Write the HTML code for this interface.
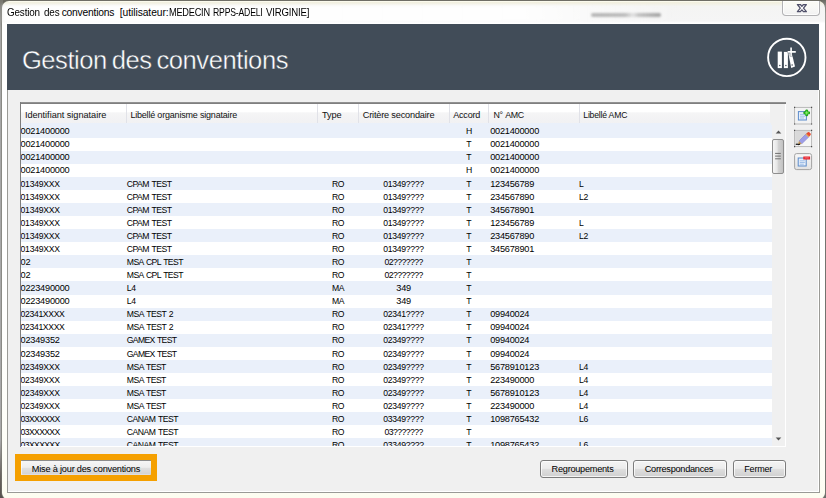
<!DOCTYPE html>
<html lang="fr">
<head>
<meta charset="utf-8">
<title>Gestion des conventions</title>
<style>
html,body{margin:0;padding:0;}
body{width:826px;height:498px;overflow:hidden;position:relative;background:#68675e;font-family:"Liberation Sans","DejaVu Sans",sans-serif;color:#111;}
.abs{position:absolute;}
#outerL{left:0;top:0;width:3px;height:498px;background:linear-gradient(#77766e 0,#8c8c88 10px,#a6a6a6 30px,#a9a9a9 440px,#6a6560 475px,#55504c 498px);}
#outerR{left:822px;top:0;width:4px;height:498px;background:linear-gradient(#6a6a62 0,#8a8a86 6px,#c4c4c4 14px,#cfcfcf 60px,#8a8a88 120px,#707070 170px,#6e6e6c 498px);}
#frame{left:1.6px;top:0.9px;width:823.9px;height:498.6px;border-radius:7px 7px 6px 6px;box-shadow:0 0 0 0.6px #77776f;background:linear-gradient(#fffff4 0,#f1efde 1.6px,#f2f1e6 3px,#f4f4f3 5.5px,#f5f5f5 20px,#fefefe 22px,#ffffff 23px,#ffffff 300px,#fefef6 470px,#fdfdf0 498px);}
#fline{left:6.6px;top:90px;width:813.7px;height:402.8px;box-sizing:border-box;border:1px solid #9a9a96;border-top:none;background:#fff;}
#title{left:0;top:5.7px;width:400px;height:13px;}
.tf{position:absolute;top:0;font-size:10.3px;line-height:13px;color:#000;white-space:pre;transform-origin:0 50%;}
.f{position:absolute;top:0;white-space:pre;transform-origin:0 50%;}
#closebtn{left:782px;top:1px;width:37.6px;height:15.4px;box-sizing:border-box;border:1px solid #b2b2b4;border-top:none;border-radius:0 0 4px 4px;background:linear-gradient(#fbfbf4,#f8f8f6 50%,#f1f1f1);box-shadow:inset 0 0 0 1px rgba(255,255,255,.8);}
#client{left:7.7px;top:24px;width:810.3px;height:466.9px;background:#f0f0f0;}
#hdr{left:7px;top:24px;width:812.4px;height:66px;background:#414c58;}
#hdr h1{position:absolute;left:14.9px;top:20.6px;margin:0;font-weight:normal;font-size:25.6px;line-height:30px;color:#fff;white-space:nowrap;letter-spacing:-0.46px;word-spacing:-1.8px;-webkit-text-stroke:0.4px #414c58;}
#list{left:20px;top:102px;width:766.4px;height:345.1px;background:#fff;overflow:hidden;}
#lt{left:0;top:0.2px;width:766.4px;height:1.6px;background:linear-gradient(#9a9a9a,#767676);}
#ll{left:0.2px;top:0;width:1.2px;height:345.1px;background:#7c7c7c;}
#lhead{left:1.2px;top:1.8px;width:748.8px;height:19px;background:linear-gradient(#ffffff 0%,#ffffff 42%,#f5f5f6 46%,#f1f1f3 100%);border-bottom:1px solid #dcdde0;font-size:9.2px;line-height:12px;color:#111;}
#lhead .f{top:5.2px;}
#lhead i{position:absolute;top:0;width:1px;height:19px;background:#e1e2e8;}
#lhfill{left:750px;top:1.8px;width:15.4px;height:21px;background:#f0f0f0;}
#rowfill{left:1.2px;top:21.4px;width:750.3px;height:2px;background:#eaf0fa;}
#rows{left:0;top:23px;width:751.5px;height:321.2px;overflow:hidden;}
.r{position:absolute;left:0;width:751.5px;height:13.04px;font-size:9.2px;line-height:13px;white-space:nowrap;color:#000;}
.r.a{background:#eaf0fa;}
.rt{position:absolute;left:0;width:751px;height:13px;}
#sb{left:751.5px;top:22.8px;width:13.6px;height:321.4px;background:#f0f0f0;}
#thumb{left:0.7px;top:14.5px;width:11.8px;height:34.6px;border:1px solid #8e8e8e;border-radius:2px;background:linear-gradient(90deg,#f6f6f6,#e6e6e6 40%,#d2d2d2 55%,#c2c2c2);box-sizing:border-box;}
.btn{box-sizing:border-box;border:1px solid #7c7c7c;border-radius:3px;background:linear-gradient(#f4f4f4 0%,#ececec 46%,#dedede 52%,#d0d0d0 100%);font-size:9.2px;line-height:14px;color:#000;white-space:nowrap;box-shadow:inset 0 0 0 1px rgba(255,255,255,.75);}
.btn .f{top:1.3px;}
.btn.flat{border:none;border-top:0.7px solid #8c8c8c;border-radius:1px;box-shadow:inset 1px 0 0 rgba(255,255,255,.6);background:linear-gradient(#f6f6f6 0%,#eeeeee 45%,#e0e0e0 52%,#d4d4d4 92%,#e6e6ee 100%);}
.btn.flat .f{top:0.8px;}
#hl{left:14.9px;top:454.2px;width:142.3px;height:26.6px;background:#f5a000;}
.ib{box-sizing:border-box;width:18px;height:17px;border:1px solid #8a8a8a;border-radius:2px;background:linear-gradient(#f6f6f6,#e4e4e4);}
</style>
</head>
<body>
<div id="outerL" class="abs"></div><div id="outerR" class="abs"></div>
<div id="frame" class="abs"></div>
<div id="fline" class="abs"></div><div class="abs" style="left:2px;top:23px;width:822.6px;height:67px;background:#fff"></div>
<div class="abs" style="left:3px;top:5px;width:700px;height:17px;background:linear-gradient(90deg,rgba(255,255,255,.9) 0,rgba(255,255,255,.85) 520px,rgba(255,255,255,0) 680px);filter:blur(1.5px)"></div>
<div class="abs" style="left:591px;top:12.6px;width:70px;height:4.4px;filter:blur(1.3px);background:linear-gradient(90deg,rgba(130,130,130,.55) 0,rgba(130,130,130,.5) 34px,rgba(150,150,150,.2) 42px,rgba(130,130,130,.45) 48px,rgba(110,110,110,.6) 100%);border-radius:2px"></div>
<div id="title" class="abs"><span class="tf" style="left:7.20px;letter-spacing:-0.177px;transform:scaleX(0.9605);">Gestion </span><span class="tf" style="left:43.70px;letter-spacing:-0.194px;transform:scaleX(0.9610);">des </span><span class="tf" style="left:61.70px;letter-spacing:-0.225px;">conventions </span><span class="tf" style="left:119.80px;letter-spacing:-0.077px;">[utilisateur: </span><span class="tf" style="left:168.50px;letter-spacing:-0.237px;transform:scaleX(0.8923);">MEDECIN </span><span class="tf" style="left:212.50px;letter-spacing:-0.214px;transform:scaleX(0.8392);">RPPS-ADELI </span><span class="tf" style="left:266.00px;letter-spacing:-0.187px;transform:scaleX(0.9312);">VIRGINIE] </span></div>
<div id="closebtn" class="abs"><svg width="35" height="14" viewBox="0 0 35 14" style="display:block;margin-left:1px"><path d="M13.4 3.5 H16.4 L17.9 5.3 L19.4 3.5 H22.4 L19.5 7.1 L22.4 10.7 H19.4 L17.9 8.9 L16.4 10.7 H13.4 L16.3 7.1 Z" fill="#fafafa" stroke="#50506a" stroke-width="1.25" stroke-linejoin="round"/></svg></div>
<div id="client" class="abs"></div>
<div id="hdr" class="abs"><h1>Gestion des conventions</h1>
<svg class="abs" style="left:758px;top:10.5px" width="44" height="46" viewBox="0 0 44 46">
<circle cx="21.8" cy="22.4" r="18.7" fill="none" stroke="#fff" stroke-width="1.9"/>
<rect x="12.7" y="16.6" width="4.2" height="16.5" fill="#fff"/>
<rect x="18.9" y="16.9" width="4" height="16.2" fill="#fff"/>
<path d="M23.2 17.6 L26.4 16.8 L30.0 31.5 L26.2 32.9 Z" fill="#fff"/>
<path d="M26.1 12.4 V21.4 M22.6 16.9 H30.8" stroke="#414c58" stroke-width="2.7" fill="none"/>
<path d="M26.1 12.4 V21.4 M22.6 16.9 H30.8" stroke="#fff" stroke-width="1.6" fill="none"/>
<circle cx="14.8" cy="30.6" r="0.75" fill="#414c58"/><circle cx="20.9" cy="30.6" r="0.75" fill="#414c58"/><circle cx="27.1" cy="30.1" r="0.75" fill="#414c58"/>
</svg>
</div>
<div id="list" class="abs">
<div id="lhead" class="abs"><span class="f" style="left:3.70px;letter-spacing:-0.038px;">Identifiant signataire </span><span class="f" style="left:109.20px;letter-spacing:-0.180px;font-size:8.98px;">Libellé organisme signataire </span><span class="f" style="left:300.80px;letter-spacing:-0.096px;">Type </span><span class="f" style="left:341.60px;letter-spacing:-0.192px;">Critère secondaire </span><span class="f" style="left:432.00px;letter-spacing:-0.211px;font-size:9.05px;">Accord </span><span class="f" style="left:472.40px;letter-spacing:-0.387px;font-size:8.85px;word-spacing:0.9px;">N° AMC </span><span class="f" style="left:562.10px;letter-spacing:-0.194px;font-size:8.65px;">Libellé AMC </span>
<i style="left:104.9px"></i><i style="left:296.3px"></i><i style="left:336.4px"></i><i style="left:427.5px"></i><i style="left:467.1px"></i><i style="left:557.6px"></i>
</div>
<div id="lhfill" class="abs"></div>
<div id="rowfill" class="abs"></div>
<div id="rows" class="abs">
<div class="r a" style="top:0.00px"><div class="rt" style="top:-0.30px"><span class="f" style="left:0.60px;letter-spacing:-0.227px;">0021400000 </span><span class="f" style="left:445.95px;letter-spacing:-0.540px;font-size:8.65px;">H </span><span class="f" style="left:470.20px;letter-spacing:-0.227px;">0021400000 </span></div></div>
<div class="r" style="top:13.04px"><div class="rt" style="top:-0.34px"><span class="f" style="left:0.60px;letter-spacing:-0.227px;">0021400000 </span><span class="f" style="left:446.36px;letter-spacing:-0.393px;font-size:8.65px;">T </span><span class="f" style="left:470.20px;letter-spacing:-0.227px;">0021400000 </span></div></div>
<div class="r a" style="top:26.08px"><div class="rt" style="top:-0.38px"><span class="f" style="left:0.60px;letter-spacing:-0.227px;">0021400000 </span><span class="f" style="left:446.36px;letter-spacing:-0.393px;font-size:8.65px;">T </span><span class="f" style="left:470.20px;letter-spacing:-0.227px;">0021400000 </span></div></div>
<div class="r" style="top:39.12px"><div class="rt" style="top:-0.42px"><span class="f" style="left:0.60px;letter-spacing:-0.227px;">0021400000 </span><span class="f" style="left:445.95px;letter-spacing:-0.540px;font-size:8.65px;">H </span><span class="f" style="left:470.20px;letter-spacing:-0.227px;">0021400000 </span></div></div>
<div class="r a" style="top:52.16px"><div class="rt" style="top:0.54px"><span class="f" style="left:0.60px;letter-spacing:-0.279px;font-size:8.65px;">01349XXX </span><span class="f" style="left:106.80px;letter-spacing:-0.530px;font-size:8.65px;word-spacing:0.9px;">CPAM TEST </span><span class="f" style="left:311.89px;letter-spacing:-0.373px;font-size:8.65px;">RO </span><span class="f" style="left:363.23px;letter-spacing:-0.282px;font-size:8.65px;">01349???? </span><span class="f" style="left:446.36px;letter-spacing:-0.393px;font-size:8.65px;">T </span><span class="f" style="left:470.20px;letter-spacing:-0.227px;">123456789 </span><span class="f" style="left:559.00px;letter-spacing:-0.735px;font-size:8.65px;">L </span></div></div>
<div class="r" style="top:65.20px"><div class="rt" style="top:0.50px"><span class="f" style="left:0.60px;letter-spacing:-0.279px;font-size:8.65px;">01349XXX </span><span class="f" style="left:106.80px;letter-spacing:-0.530px;font-size:8.65px;word-spacing:0.9px;">CPAM TEST </span><span class="f" style="left:311.89px;letter-spacing:-0.373px;font-size:8.65px;">RO </span><span class="f" style="left:363.23px;letter-spacing:-0.282px;font-size:8.65px;">01349???? </span><span class="f" style="left:446.36px;letter-spacing:-0.393px;font-size:8.65px;">T </span><span class="f" style="left:470.20px;letter-spacing:-0.227px;">234567890 </span><span class="f" style="left:559.00px;letter-spacing:-0.327px;font-size:8.65px;">L2 </span></div></div>
<div class="r a" style="top:78.24px"><div class="rt" style="top:0.46px"><span class="f" style="left:0.60px;letter-spacing:-0.279px;font-size:8.65px;">01349XXX </span><span class="f" style="left:106.80px;letter-spacing:-0.530px;font-size:8.65px;word-spacing:0.9px;">CPAM TEST </span><span class="f" style="left:311.89px;letter-spacing:-0.373px;font-size:8.65px;">RO </span><span class="f" style="left:363.23px;letter-spacing:-0.282px;font-size:8.65px;">01349???? </span><span class="f" style="left:446.36px;letter-spacing:-0.393px;font-size:8.65px;">T </span><span class="f" style="left:470.20px;letter-spacing:-0.227px;">345678901 </span></div></div>
<div class="r" style="top:91.28px"><div class="rt" style="top:0.42px"><span class="f" style="left:0.60px;letter-spacing:-0.279px;font-size:8.65px;">01349XXX </span><span class="f" style="left:106.80px;letter-spacing:-0.530px;font-size:8.65px;word-spacing:0.9px;">CPAM TEST </span><span class="f" style="left:311.89px;letter-spacing:-0.373px;font-size:8.65px;">RO </span><span class="f" style="left:363.23px;letter-spacing:-0.282px;font-size:8.65px;">01349???? </span><span class="f" style="left:446.36px;letter-spacing:-0.393px;font-size:8.65px;">T </span><span class="f" style="left:470.20px;letter-spacing:-0.227px;">123456789 </span><span class="f" style="left:559.00px;letter-spacing:-0.735px;font-size:8.65px;">L </span></div></div>
<div class="r a" style="top:104.32px"><div class="rt" style="top:0.38px"><span class="f" style="left:0.60px;letter-spacing:-0.279px;font-size:8.65px;">01349XXX </span><span class="f" style="left:106.80px;letter-spacing:-0.530px;font-size:8.65px;word-spacing:0.9px;">CPAM TEST </span><span class="f" style="left:311.89px;letter-spacing:-0.373px;font-size:8.65px;">RO </span><span class="f" style="left:363.23px;letter-spacing:-0.282px;font-size:8.65px;">01349???? </span><span class="f" style="left:446.36px;letter-spacing:-0.393px;font-size:8.65px;">T </span><span class="f" style="left:470.20px;letter-spacing:-0.227px;">234567890 </span><span class="f" style="left:559.00px;letter-spacing:-0.327px;font-size:8.65px;">L2 </span></div></div>
<div class="r" style="top:117.36px"><div class="rt" style="top:0.34px"><span class="f" style="left:0.60px;letter-spacing:-0.279px;font-size:8.65px;">01349XXX </span><span class="f" style="left:106.80px;letter-spacing:-0.530px;font-size:8.65px;word-spacing:0.9px;">CPAM TEST </span><span class="f" style="left:311.89px;letter-spacing:-0.373px;font-size:8.65px;">RO </span><span class="f" style="left:363.23px;letter-spacing:-0.282px;font-size:8.65px;">01349???? </span><span class="f" style="left:446.36px;letter-spacing:-0.393px;font-size:8.65px;">T </span><span class="f" style="left:470.20px;letter-spacing:-0.227px;">345678901 </span></div></div>
<div class="r a" style="top:130.40px"><div class="rt" style="top:0.30px"><span class="f" style="left:0.60px;letter-spacing:-0.227px;">02 </span><span class="f" style="left:106.80px;letter-spacing:-0.590px;font-size:8.65px;word-spacing:0.9px;">MSA CPL TEST </span><span class="f" style="left:311.89px;letter-spacing:-0.373px;font-size:8.65px;">RO </span><span class="f" style="left:364.45px;letter-spacing:-0.553px;font-size:8.65px;">02??????? </span><span class="f" style="left:446.36px;letter-spacing:-0.393px;font-size:8.65px;">T </span></div></div>
<div class="r" style="top:143.44px"><div class="rt" style="top:0.26px"><span class="f" style="left:0.60px;letter-spacing:-0.227px;">02 </span><span class="f" style="left:106.80px;letter-spacing:-0.590px;font-size:8.65px;word-spacing:0.9px;">MSA CPL TEST </span><span class="f" style="left:311.89px;letter-spacing:-0.373px;font-size:8.65px;">RO </span><span class="f" style="left:364.45px;letter-spacing:-0.553px;font-size:8.65px;">02??????? </span><span class="f" style="left:446.36px;letter-spacing:-0.393px;font-size:8.65px;">T </span></div></div>
<div class="r a" style="top:156.48px"><div class="rt" style="top:0.22px"><span class="f" style="left:0.60px;letter-spacing:-0.227px;">0223490000 </span><span class="f" style="left:106.80px;letter-spacing:-0.327px;font-size:8.65px;">L4 </span><span class="f" style="left:311.89px;letter-spacing:-0.373px;font-size:8.65px;">MA </span><span class="f" style="left:376.27px;letter-spacing:-0.227px;">349 </span><span class="f" style="left:446.36px;letter-spacing:-0.393px;font-size:8.65px;">T </span></div></div>
<div class="r" style="top:169.52px"><div class="rt" style="top:0.18px"><span class="f" style="left:0.60px;letter-spacing:-0.227px;">0223490000 </span><span class="f" style="left:106.80px;letter-spacing:-0.327px;font-size:8.65px;">L4 </span><span class="f" style="left:311.89px;letter-spacing:-0.373px;font-size:8.65px;">MA </span><span class="f" style="left:376.27px;letter-spacing:-0.227px;">349 </span><span class="f" style="left:446.36px;letter-spacing:-0.393px;font-size:8.65px;">T </span></div></div>
<div class="r a" style="top:182.56px"><div class="rt" style="top:0.14px"><span class="f" style="left:0.60px;letter-spacing:-0.346px;font-size:8.65px;">02341XXXX </span><span class="f" style="left:106.80px;letter-spacing:-0.501px;font-size:8.65px;word-spacing:0.9px;">MSA TEST 2 </span><span class="f" style="left:311.89px;letter-spacing:-0.373px;font-size:8.65px;">RO </span><span class="f" style="left:363.23px;letter-spacing:-0.282px;font-size:8.65px;">02341???? </span><span class="f" style="left:446.36px;letter-spacing:-0.393px;font-size:8.65px;">T </span><span class="f" style="left:470.20px;letter-spacing:-0.227px;">09940024 </span></div></div>
<div class="r" style="top:195.60px"><div class="rt" style="top:0.10px"><span class="f" style="left:0.60px;letter-spacing:-0.346px;font-size:8.65px;">02341XXXX </span><span class="f" style="left:106.80px;letter-spacing:-0.501px;font-size:8.65px;word-spacing:0.9px;">MSA TEST 2 </span><span class="f" style="left:311.89px;letter-spacing:-0.373px;font-size:8.65px;">RO </span><span class="f" style="left:363.23px;letter-spacing:-0.282px;font-size:8.65px;">02341???? </span><span class="f" style="left:446.36px;letter-spacing:-0.393px;font-size:8.65px;">T </span><span class="f" style="left:470.20px;letter-spacing:-0.227px;">09940024 </span></div></div>
<div class="r a" style="top:208.64px"><div class="rt" style="top:0.06px"><span class="f" style="left:0.60px;letter-spacing:-0.227px;">02349352 </span><span class="f" style="left:106.80px;letter-spacing:-0.677px;font-size:8.65px;word-spacing:0.9px;">GAMEX TEST </span><span class="f" style="left:311.89px;letter-spacing:-0.373px;font-size:8.65px;">RO </span><span class="f" style="left:363.23px;letter-spacing:-0.282px;font-size:8.65px;">02349???? </span><span class="f" style="left:446.36px;letter-spacing:-0.393px;font-size:8.65px;">T </span><span class="f" style="left:470.20px;letter-spacing:-0.227px;">09940024 </span></div></div>
<div class="r" style="top:221.68px"><div class="rt" style="top:1.02px"><span class="f" style="left:0.60px;letter-spacing:-0.227px;">02349352 </span><span class="f" style="left:106.80px;letter-spacing:-0.677px;font-size:8.65px;word-spacing:0.9px;">GAMEX TEST </span><span class="f" style="left:311.89px;letter-spacing:-0.373px;font-size:8.65px;">RO </span><span class="f" style="left:363.23px;letter-spacing:-0.282px;font-size:8.65px;">02349???? </span><span class="f" style="left:446.36px;letter-spacing:-0.393px;font-size:8.65px;">T </span><span class="f" style="left:470.20px;letter-spacing:-0.227px;">09940024 </span></div></div>
<div class="r a" style="top:234.72px"><div class="rt" style="top:0.98px"><span class="f" style="left:0.60px;letter-spacing:-0.279px;font-size:8.65px;">02349XXX </span><span class="f" style="left:106.80px;letter-spacing:-0.549px;font-size:8.65px;word-spacing:0.9px;">MSA TEST </span><span class="f" style="left:311.89px;letter-spacing:-0.373px;font-size:8.65px;">RO </span><span class="f" style="left:363.23px;letter-spacing:-0.282px;font-size:8.65px;">02349???? </span><span class="f" style="left:446.36px;letter-spacing:-0.393px;font-size:8.65px;">T </span><span class="f" style="left:470.20px;letter-spacing:-0.227px;">5678910123 </span><span class="f" style="left:559.00px;letter-spacing:-0.327px;font-size:8.65px;">L4 </span></div></div>
<div class="r" style="top:247.76px"><div class="rt" style="top:0.94px"><span class="f" style="left:0.60px;letter-spacing:-0.279px;font-size:8.65px;">02349XXX </span><span class="f" style="left:106.80px;letter-spacing:-0.549px;font-size:8.65px;word-spacing:0.9px;">MSA TEST </span><span class="f" style="left:311.89px;letter-spacing:-0.373px;font-size:8.65px;">RO </span><span class="f" style="left:363.23px;letter-spacing:-0.282px;font-size:8.65px;">02349???? </span><span class="f" style="left:446.36px;letter-spacing:-0.393px;font-size:8.65px;">T </span><span class="f" style="left:470.20px;letter-spacing:-0.227px;">223490000 </span><span class="f" style="left:559.00px;letter-spacing:-0.327px;font-size:8.65px;">L4 </span></div></div>
<div class="r a" style="top:260.80px"><div class="rt" style="top:0.90px"><span class="f" style="left:0.60px;letter-spacing:-0.279px;font-size:8.65px;">02349XXX </span><span class="f" style="left:106.80px;letter-spacing:-0.549px;font-size:8.65px;word-spacing:0.9px;">MSA TEST </span><span class="f" style="left:311.89px;letter-spacing:-0.373px;font-size:8.65px;">RO </span><span class="f" style="left:363.23px;letter-spacing:-0.282px;font-size:8.65px;">02349???? </span><span class="f" style="left:446.36px;letter-spacing:-0.393px;font-size:8.65px;">T </span><span class="f" style="left:470.20px;letter-spacing:-0.227px;">5678910123 </span><span class="f" style="left:559.00px;letter-spacing:-0.327px;font-size:8.65px;">L4 </span></div></div>
<div class="r" style="top:273.84px"><div class="rt" style="top:0.86px"><span class="f" style="left:0.60px;letter-spacing:-0.279px;font-size:8.65px;">02349XXX </span><span class="f" style="left:106.80px;letter-spacing:-0.549px;font-size:8.65px;word-spacing:0.9px;">MSA TEST </span><span class="f" style="left:311.89px;letter-spacing:-0.373px;font-size:8.65px;">RO </span><span class="f" style="left:363.23px;letter-spacing:-0.282px;font-size:8.65px;">02349???? </span><span class="f" style="left:446.36px;letter-spacing:-0.393px;font-size:8.65px;">T </span><span class="f" style="left:470.20px;letter-spacing:-0.227px;">223490000 </span><span class="f" style="left:559.00px;letter-spacing:-0.327px;font-size:8.65px;">L4 </span></div></div>
<div class="r a" style="top:286.88px"><div class="rt" style="top:0.82px"><span class="f" style="left:0.60px;letter-spacing:-0.639px;font-size:8.65px;">03XXXXXX </span><span class="f" style="left:106.80px;letter-spacing:-0.513px;font-size:8.65px;word-spacing:0.9px;">CANAM TEST </span><span class="f" style="left:311.89px;letter-spacing:-0.373px;font-size:8.65px;">RO </span><span class="f" style="left:363.23px;letter-spacing:-0.282px;font-size:8.65px;">03349???? </span><span class="f" style="left:446.36px;letter-spacing:-0.393px;font-size:8.65px;">T </span><span class="f" style="left:470.20px;letter-spacing:-0.227px;">1098765432 </span><span class="f" style="left:559.00px;letter-spacing:-0.327px;font-size:8.65px;">L6 </span></div></div>
<div class="r" style="top:299.92px"><div class="rt" style="top:0.78px"><span class="f" style="left:0.60px;letter-spacing:-0.639px;font-size:8.65px;">03XXXXXX </span><span class="f" style="left:106.80px;letter-spacing:-0.513px;font-size:8.65px;word-spacing:0.9px;">CANAM TEST </span><span class="f" style="left:311.89px;letter-spacing:-0.373px;font-size:8.65px;">RO </span><span class="f" style="left:364.45px;letter-spacing:-0.553px;font-size:8.65px;">03??????? </span><span class="f" style="left:446.36px;letter-spacing:-0.393px;font-size:8.65px;">T </span></div></div>
<div class="r a" style="top:312.96px"><div class="rt" style="top:0.74px"><span class="f" style="left:0.60px;letter-spacing:-0.639px;font-size:8.65px;">03XXXXXX </span><span class="f" style="left:106.80px;letter-spacing:-0.513px;font-size:8.65px;word-spacing:0.9px;">CANAM TEST </span><span class="f" style="left:311.89px;letter-spacing:-0.373px;font-size:8.65px;">RO </span><span class="f" style="left:363.23px;letter-spacing:-0.282px;font-size:8.65px;">03349???? </span><span class="f" style="left:446.36px;letter-spacing:-0.393px;font-size:8.65px;">T </span><span class="f" style="left:470.20px;letter-spacing:-0.227px;">1098765432 </span><span class="f" style="left:559.00px;letter-spacing:-0.327px;font-size:8.65px;">L6 </span></div></div>
</div>
<div id="sb" class="abs">
<svg class="abs" style="left:3.6px;top:4.9px" width="7" height="4" viewBox="0 0 7 4"><path d="M0.7 3.6 L3.5 0.5 L6.3 3.6 Z" fill="#555"/></svg>
<div id="thumb" class="abs"><svg width="10" height="34" viewBox="0 0 10 34" style="display:block"><path d="M2.1 13.4H7.8M2.1 16.1H7.8M2.1 18.8H7.8" stroke="#6e6e6e" stroke-width="1"/></svg></div>
<svg class="abs" style="left:3.6px;top:312.2px" width="7" height="4" viewBox="0 0 7 4"><path d="M0.7 0.4 L6.3 0.4 L3.5 3.5 Z" fill="#555"/></svg>
</div>
<div id="lt" class="abs"></div><div id="ll" class="abs"></div>
</div>
<!-- side icon buttons -->
<svg class="abs" style="left:793px;top:106px" width="20" height="20" viewBox="0 0 20 20">
<rect x="1.6" y="1.4" width="17" height="16.6" fill="#f3f3f3" stroke="#b4b4b4" stroke-width="0.9"/>
<path d="M1.6 1.4h.01M18.6 1.4h.01M1.6 18h.01M18.6 18h.01" stroke="#4a4a4a" stroke-width="1.1" stroke-linecap="square"/>
<rect x="5.4" y="5.6" width="8" height="8.4" fill="#e6effa" stroke="#5b8bcb" stroke-width="1"/>
<path d="M7 8.4H12M7 10.2H12M7 12H11" stroke="#8fb4e3" stroke-width="0.8"/>
<path d="M12.8 4h1.8v1.9h1.9v1.9h-1.9v1.9H12.8V7.8h-1.9V5.9H12.8z" fill="#35d41f" stroke="#169a12" stroke-width="0.9" stroke-linejoin="round"/>
<path d="M13.7 5.2v3.3M12 6.85h3.4" stroke="#9cf57c" stroke-width="0.7"/>
</svg>
<svg class="abs" style="left:793px;top:129px" width="20" height="20" viewBox="0 0 20 20">
<rect x="1.6" y="1.4" width="17" height="16.2" fill="#f6f6f6" stroke="#b4b4b4" stroke-width="0.9"/>
<path d="M2.1 1.9H18.1L2.1 17.1Z" fill="#d9d9d9"/>
<path d="M1.6 1.4h.01M18.6 1.4h.01M1.6 17.6h.01M18.6 17.6h.01" stroke="#4a4a4a" stroke-width="1.1" stroke-linecap="square"/>
<path d="M6 12 L13.2 4.8 L16.2 7.6 L8.8 14.8 Z" fill="#9d9de6" stroke="#7878c8" stroke-width="0.5"/>
<path d="M13.2 4.8 L14.8 3.2 Q15.5 2.6 16.3 3.3 L17.6 4.6 Q18.2 5.3 17.6 6 L16.2 7.6 Z" fill="#ea4a2c"/>
<path d="M12.5 5.5 L13.2 4.8 L16.2 7.6 L15.5 8.3 Z" fill="#e9b04a"/>
<path d="M6 12 L8.8 14.8 L4.8 15.6 Z" fill="#c79a5a"/>
<path d="M2.8 15.4 Q4.2 14.6 5.2 15.5 L7.2 15.2" stroke="#1a1a1a" stroke-width="1.2" fill="none"/>
</svg>
<svg class="abs" style="left:793px;top:152px" width="20" height="20" viewBox="0 0 20 20">
<defs><linearGradient id="g3" x1="0" y1="0" x2="0" y2="1"><stop offset="0" stop-color="#f8f8f8"/><stop offset="1" stop-color="#e2e2e2"/></linearGradient></defs>
<rect x="1.6" y="1.6" width="17" height="16" rx="2" fill="url(#g3)" stroke="#9a9a9a" stroke-width="0.9"/>
<rect x="5.2" y="6" width="8" height="8" fill="#e6effa" stroke="#5b8bcb" stroke-width="1"/>
<path d="M6.8 8.8H11.8M6.8 10.5H11.8M6.8 12.2H10.8" stroke="#8fb4e3" stroke-width="0.8"/>
<rect x="10.3" y="4.5" width="6.8" height="3" fill="#e5222c"/>
<path d="M11.6 5.9H15.8" stroke="#ff9a9a" stroke-width="0.7"/>
</svg>
<!-- bottom buttons -->
<div id="hl" class="abs"></div>
<div class="abs btn flat" style="left:21.1px;top:460.1px;width:130.3px;height:14.6px;"><span class="f" style="left:10.75px;letter-spacing:-0.209px;">Mise à jour des conventions </span></div>
<div class="abs btn" style="left:540.2px;top:460.2px;width:87.4px;height:17.6px;"><span class="f" style="left:10.43px;letter-spacing:-0.271px;">Regroupements </span></div>
<div class="abs btn" style="left:633.2px;top:460.2px;width:94.2px;height:17.6px;"><span class="f" style="left:10.57px;letter-spacing:-0.277px;">Correspondances </span></div>
<div class="abs btn" style="left:733.3px;top:460.2px;width:52.4px;height:17.6px;"><span class="f" style="left:10.05px;letter-spacing:-0.218px;font-size:9.01px;">Fermer </span></div>
</body>
</html>
